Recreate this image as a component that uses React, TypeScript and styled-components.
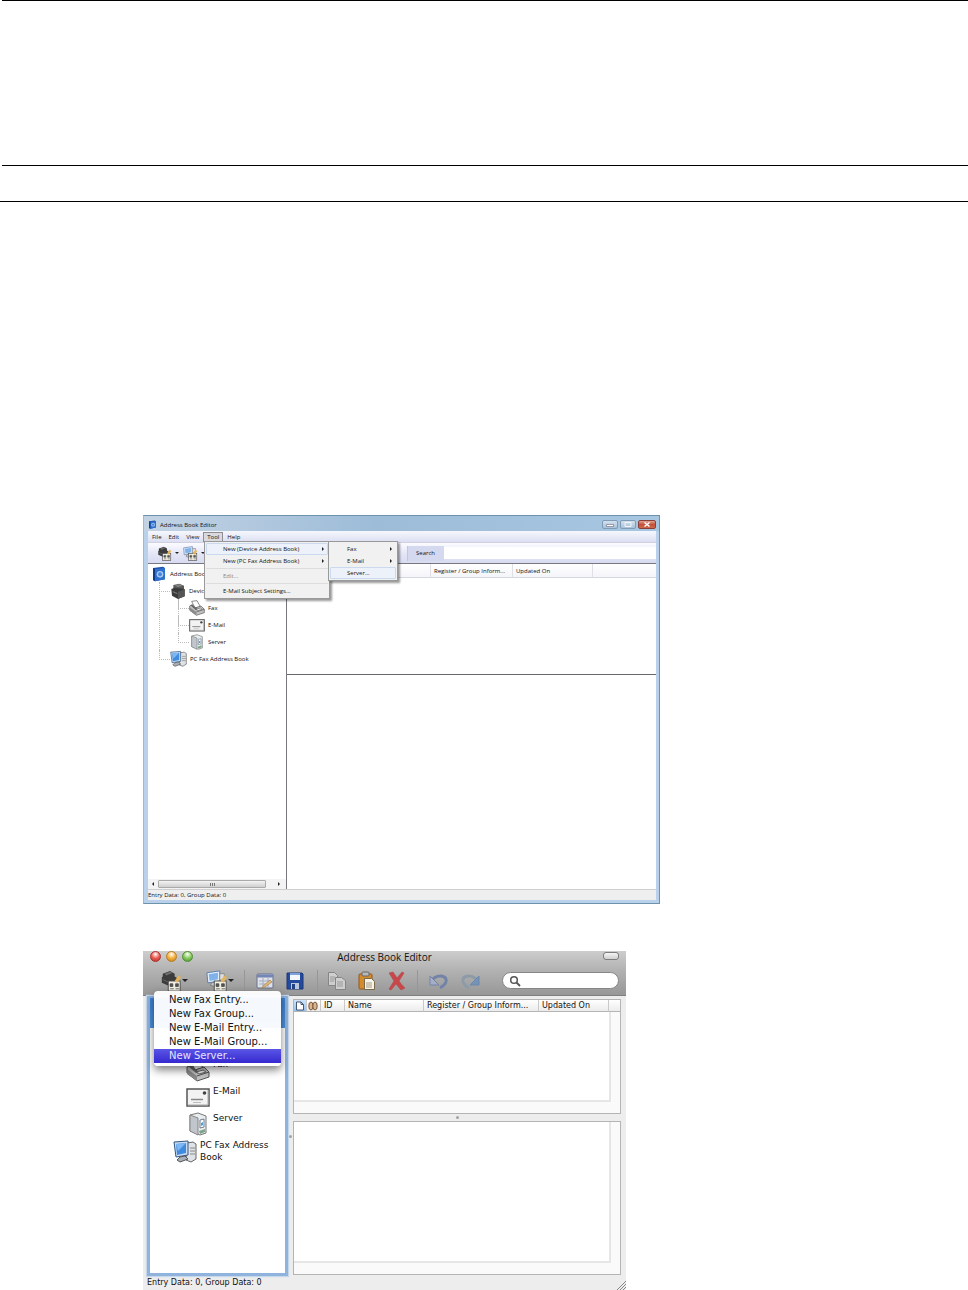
import React from "react";
import styled, { createGlobalStyle } from "styled-components";

const Global = createGlobalStyle`
  * { box-sizing: border-box; }
  body { margin: 0; background: #fff; color: #111; }
  button { font: inherit; color: inherit; border: 0; padding: 0; background: none; }
  input { font: inherit; border: 0; outline: 0; padding: 0; margin: 0; min-width: 0; width: 0; }
  svg { display: block; flex: none; }
`;

const Page = styled.main`
  display: flex;
  flex-direction: column;
`;
const Rule = styled.hr<{ $inset?: boolean; $after: number }>`
  align-self: stretch;
  height: 1px;
  border: 0;
  background: #000;
  margin: 0 0 ${(p) => p.$after}px ${(p) => (p.$inset ? 2 : 0)}px;
`;
const Figures = styled.div`
  display: flex;
  flex-direction: column;
  gap: 47px;
  padding-left: 143px;
`;

/* ---------- icons ---------- */

type IconProps = { size: number };

const BookIcon = ({ size }: IconProps) => (
  <svg width={size} height={size} viewBox="0 0 24 24">
    <path d="M3 3 18 1l3 2v17l-15 3-3-2z" fill="#1c4fa8" />
    <path d="M6 4.500 21 3v17L6 23z" fill="#2f6fce" />
    <path d="M3 3v18l3 2V4.500z" fill="#123a86" />
    <circle cx="13.500" cy="12.500" r="5" fill="#a9cbf2" />
    <circle cx="13.500" cy="12.500" r="3" fill="#4a86da" />
  </svg>
);
const DeviceIcon = ({ size }: IconProps) => (
  <svg width={size} height={size} viewBox="0 0 24 24">
    <path d="M5 3l9-2 7 3v7l-9 3-7-3z" fill="#5a5a5a" />
    <path d="M2 9l5-2 15 2v11l-10 4-9-5z" fill="#3a3a3a" />
    <path d="M12 13l10-4v11l-10 4z" fill="#555" />
    <path d="M7 4l7-2 5 2-7 2z" fill="#858585" />
    <path d="M4 12l7 3v2l-7-3z" fill="#777" />
  </svg>
);
const FaxIcon = ({ size }: IconProps) => (
  <svg width={size} height={size} viewBox="0 0 24 24">
    <path d="M4 2l8-1 5 9-8 2z" fill="#fff" stroke="#555" />
    <path d="M1 9l4-2 4 5 9-3 5 5v5l-12 4L1 15z" fill="#c2c2c2" stroke="#555" />
    <path d="M1 11l10 7v5L1 16z" fill="#8a8a8a" />
    <path d="M11 18l12-4" stroke="#555" />
    <path d="M10 14l7-2 3 2-7 2z" fill="#eee" stroke="#666" />
    <path d="M2 8l3-1 8 7-3 1z" fill="#666" />
  </svg>
);
const MailIcon = ({ size }: IconProps) => (
  <svg width={size} height={size} viewBox="0 0 24 24">
    <rect x="1" y="4" width="22" height="17" fill="#f3f3f3" stroke="#555" strokeWidth="1.500" />
    <path d="M2 20h20V5" fill="none" stroke="#aaa" />
    <path d="M5 14.500h12" stroke="#888" strokeWidth="1.500" />
    <path d="M7 17.500h8" stroke="#bbb" />
    <circle cx="18.500" cy="8" r="1.800" fill="#444" />
  </svg>
);
const ServerIcon = ({ size }: IconProps) => (
  <svg width={size} height={size} viewBox="0 0 24 24">
    <path d="M4 3l8-2 8 3v17l-6 2-10-4z" fill="#e9edf0" stroke="#777" />
    <path d="M4 3l8 3v17l-8-4z" fill="#c0c6cc" stroke="#888" />
    <path d="M14 8l4-1v8l-4 1z" fill="#fff" stroke="#6b7f92" />
    <path d="M15 11l2-1v3l-2 1z" fill="#4f9fc8" />
    <path d="M13 19l6-2v3l-5 2z" fill="#7fa38a" />
  </svg>
);
const PcIcon = ({ size }: IconProps) => (
  <svg width={size} height={size} viewBox="0 0 24 24">
    <path d="M14 4l6-1 3 2v15l-5 3-5-2z" fill="#dfe3e6" stroke="#666" />
    <path d="M17 9h5M17 12h5M17 15h5" stroke="#888" />
    <path d="M1 3l14-1v14L3 18z" fill="#c9dcf1" stroke="#33557f" />
    <path d="M3 5l10-1v10L4 16z" fill="#3f8be0" />
    <path d="M3 5l10-1-8 8z" fill="#7fb7f2" />
    <path d="M7 18l5-1 3 3-8 3-3-2z" fill="#a7b0b9" stroke="#555" />
  </svg>
);
const Tag = () => (
  <g>
    <rect x="9" y="12" width="13" height="11" fill="#f4f1e4" stroke="#4a4a4a" />
    <path d="M11 15h3v3h-3zM11 20.500h4M17 15h3v3h-3zM17 20.500h4" fill="#555" stroke="#444" strokeWidth=".8" />
    <path d="M16 12l4-6 3 2-4 6z" fill="#e3b45c" />
  </g>
);
const AddDeviceIcon = ({ size }: IconProps) => (
  <svg width={size} height={size} viewBox="0 0 24 24">
    <path d="M3 4l8-3 5 3v3l3 2v6l-8 3-9-4V8l1-1z" fill="#3c3c3c" />
    <path d="M5 4l6-2 3 1-7 3zM3 10l7 3v1l-7-3z" fill="#6d6d6d" />
    <Tag />
  </svg>
);
const AddPcIcon = ({ size }: IconProps) => (
  <svg width={size} height={size} viewBox="0 0 24 24">
    <path d="M1 3l14-2v11L2 14z" fill="#e4effb" stroke="#5579a8" />
    <path d="M3 4.500l10-1.500v7L4 12z" fill="#7fb1ea" />
    <path d="M6 14l4-1v5l-5-1z" fill="#c7ccd2" stroke="#777" />
    <path d="M15 4h5v7h-5z" fill="#ddd" stroke="#888" />
    <Tag />
  </svg>
);
const EditIcon = () => (
  <svg width="20" height="20" viewBox="0 0 20 20">
    <rect x="2" y="3" width="16" height="14" rx="1" fill="#dfe2ea" stroke="#66728f" />
    <path d="M2 3.500h16v3H2z" fill="#7486b5" />
    <path d="M4 10h12M4 13h8M8 7v9M13 7v9" stroke="#a3abbd" />
    <path d="M8 15l7-6 2 2-7 5-3 1z" fill="#e0b878" stroke="#a5855a" strokeWidth=".7" />
  </svg>
);
const SaveIcon = () => (
  <svg width="20" height="20" viewBox="0 0 20 20">
    <path d="M2 2h15l1 1v15H2z" fill="#234a9c" stroke="#1b3878" />
    <rect x="5" y="2" width="10" height="7" fill="#f3f6fb" />
    <path d="M5 2h10v2H5z" fill="#7ea2dc" />
    <rect x="6" y="12" width="8" height="6" fill="#b9c6de" />
    <rect x="7" y="13" width="3" height="5" fill="#23407f" />
  </svg>
);
const CopyIcon = () => (
  <svg width="20" height="20" viewBox="0 0 20 20">
    <g fill="#cfcfcf" stroke="#858585">
      <path d="M1.500 1.500h6l3 3v10h-9z" />
      <path d="M8.500 6.500h6l4 3v9h-10z" />
    </g>
    <path d="M3 6h5M3 8h5M3 10h4M10 11h6M10 13h6M10 15h6" stroke="#999" />
  </svg>
);
const PasteIcon = () => (
  <svg width="20" height="20" viewBox="0 0 20 20">
    <rect x="2" y="3" width="13" height="15" rx="1" fill="#d58a2c" stroke="#93591a" />
    <rect x="5" y="1" width="7" height="4" rx="1" fill="#b9b9b9" stroke="#666" />
    <path d="M7.500 7.500h7l3 3v8h-10z" fill="#f6f3e8" stroke="#7a6a4c" />
    <path d="M9 12h6M9 14h6M9 16h6" stroke="#a89c80" />
  </svg>
);
const DeleteIcon = () => (
  <svg width="20" height="20" viewBox="0 0 20 20">
    <path d="M2 2l4-1c2 3 3 4 4 6l5-6 2 1-5 8c2 3 4 5 6 7l-4 2c-2-2-3-4-5-6l-5 6-2-1 5-8C5 7 4 5 2 2z" fill="#c9474a" stroke="#b0494b" strokeWidth=".6" />
  </svg>
);
const UndoIcon = () => (
  <svg width="22" height="20" viewBox="0 0 22 20">
    <path
      d="M4 9c4-5 12-5 14-1 1 3-1 6-6 9"
      fill="none"
      stroke="#7383a8"
      strokeWidth="3"
    />
    <path d="M2 5v9h9z" fill="#a4aec6" stroke="#7383a8" />
  </svg>
);
const RedoIcon = () => (
  <svg width="22" height="20" viewBox="0 0 22 20">
    <path
      d="M18 9C14 4 6 4 4 8c-1 3 1 6 6 9"
      fill="none"
      stroke="#8d9ba9"
      strokeWidth="3"
    />
    <path d="M20 5v9h-9z" fill="#7593b8" stroke="#6b87ab" />
  </svg>
);
const SearchIcon = () => (
  <svg width="12" height="12" viewBox="0 0 12 12">
    <circle cx="5" cy="5" r="3.300" fill="none" stroke="#555" strokeWidth="1.500" />
    <path d="M7.500 7.500l3.500 3.500" stroke="#555" strokeWidth="1.800" />
  </svg>
);
const PageIcon = () => (
  <svg width="10" height="10" viewBox="0 0 10 10">
    <path d="M1.500 1h4.500l2.500 2.500V9h-7z" fill="#fff" stroke="#45566e" />
    <path d="M6 1v2.500h2.500" fill="none" stroke="#45566e" />
  </svg>
);
const PeopleIcon = () => (
  <svg width="10" height="10" viewBox="0 0 10 10">
    <g fill="#d9b591" stroke="#6d4a30" strokeWidth=".9">
      <ellipse cx="3" cy="5" rx="2.200" ry="4" />
      <ellipse cx="7" cy="5" rx="2.200" ry="4" />
    </g>
  </svg>
);

const Caret = styled.i<{ $dir: "down" | "right" | "left"; $size?: number }>`
  flex: none;
  width: 0;
  height: 0;
  border: ${(p) => p.$size ?? 2}px solid transparent;
  ${(p) =>
    p.$dir === "down"
      ? "border-top-color:#222;border-bottom-width:0;"
      : p.$dir === "right"
      ? "border-left-color:#222;border-right-width:0;"
      : "border-right-color:#222;border-left-width:0;"}
`;

/* ---------- Windows window ---------- */

const WinFrame = styled.section`
  position: relative;
  width: 100%;
  max-width: 517px;
  padding: 0 3px 3px 4px;
  border: 1px solid #6d93ac;
  border-left-color: #9db9d3;
  background: #b9d1ea;
  font: 6px/8px "Open Sans", "Noto Sans", sans-serif;
`;
const WinTitle = styled.header`
  display: flex;
  align-items: center;
  gap: 3px;
  height: 15px;
  margin: 0 -3px 0 -4px;
  padding: 2px 3px 0 4px;
  background: linear-gradient(90deg, #c3d3e4, #9dbcd8 45%, #a6c6e2);
  h2 { margin: 0; flex: 1; font-size: 6px; line-height: 8px; font-weight: 400; }
`;
const WinButtons = styled.div`
  display: flex;
  gap: 2px;
`;
const WinButton = styled.button<{ $close?: boolean }>`
  display: grid;
  place-items: center;
  width: ${(p) => (p.$close ? 18 : 16)}px;
  height: 9px;
  border: 1px solid ${(p) => (p.$close ? "#8a4038" : "#7f9bb5")};
  border-radius: 2px;
  background: ${(p) =>
    p.$close
      ? "linear-gradient(#e3a294, #c4513a 50%, #cf6a4c)"
      : "linear-gradient(#d3e1ee, #a9c1d9)"};
`;
const WinClient = styled.div`
  position: relative;
  display: flex;
  flex-direction: column;
  background: #fff;
`;
const MenuBar = styled.nav`
  display: flex;
  align-items: center;
  height: 12px;
  padding-left: 1px;
  background: linear-gradient(#f6f7fd, #dcdff2);
  border-bottom: 1px solid #cfd0e0;
`;
const MenuBarItem = styled.button<{ $open?: boolean }>`
  height: 10px;
  padding: 0 ${(p) => (p.$open ? 3 : 2)}px;
  margin-right: 1px;
  font-size: 6px;
  line-height: 8px;
  border: 1px solid ${(p) => (p.$open ? "#8d8d92" : "transparent")};
  background: ${(p) => (p.$open ? "#d9d9de" : "none")};
`;
const WinToolbar = styled.div`
  display: flex;
  align-items: center;
  height: 21px;
  padding-left: 9px;
  background: linear-gradient(#fbfbff, #e2e4f6 60%, #d9dbf1);
  border-bottom: 1px solid #77777f;
`;
const ToolButton = styled.button<{ $gap: number }>`
  display: flex;
  align-items: center;
  gap: 3px;
  margin-right: ${(p) => p.$gap}px;
`;
const WinSearch = styled.form`
  display: flex;
  flex: 1;
  height: 15px;
  margin-left: 198px;
  border-left: 1px solid #c2c5dc;
  label { width: 36px; padding: 3px 0 0 8px; background: #d5d9f0; }
  input { flex: 1; height: 12px; margin-top: 1px; background: #fff; }
`;
const WinBody = styled.div`
  display: grid;
  grid-template-columns: 138px 1fr;
  height: 325px;
`;
const WinTree = styled.div`
  position: relative;
  display: flex;
  flex-direction: column;
  min-width: 0;
  padding-top: 1px;
`;
const TreeList = styled.ul<{ $inset?: number }>`
  position: relative;
  margin: 0;
  padding: 0 0 0 ${(p) => p.$inset ?? 0}px;
  list-style: none;
`;
const TreeRow = styled.div`
  display: flex;
  align-items: center;
  gap: 3px;
  height: 17px;
  white-space: nowrap;
`;
const Branch = styled.li<{ $last?: boolean }>`
  position: relative;
  &::before {
    content: "";
    position: absolute;
    left: -11px;
    top: 0;
    width: 10px;
    height: 9px;
    border-left: 1px dotted #bbb;
    border-bottom: 1px dotted #bbb;
  }
  &::after {
    content: "";
    display: ${(p) => (p.$last ? "none" : "block")};
    position: absolute;
    left: -11px;
    top: 0;
    bottom: 0;
    border-left: 1px dotted #bbb;
  }
`;
const WinScroll = styled.div`
  display: flex;
  align-items: center;
  justify-content: space-between;
  height: 10px;
  margin-top: auto;
  padding: 0 6px 0 4px;
  background: #f3f3f3;
  div {
    flex: 1;
    display: grid;
    place-items: center;
    height: 8px;
    margin: 0 12px 0 4px;
    border: 1px solid #aaa;
    border-radius: 1px;
    background: linear-gradient(#f4f4f4, #cfcfcf);
  }
  div::before {
    content: "";
    width: 5px;
    height: 3px;
    background: repeating-linear-gradient(90deg, #777 0 1px, transparent 1px 2px);
  }
`;
const WinPanes = styled.div`
  display: grid;
  grid-template-rows: 107px 1fr;
  gap: 3px;
  min-width: 0;
  border-left: 1px solid #77777f;
`;
const WinLower = styled.div`
  border-top: 1px solid #66666c;
`;
const WinTable = styled.table`
  width: 100%;
  table-layout: fixed;
  border-collapse: separate;
  border-spacing: 0;
  th {
    height: 14px;
    padding: 0 3px;
    font-weight: 400;
    text-align: left;
    white-space: nowrap;
    border-right: 1px solid #dfe0e6;
    border-bottom: 1px solid #d5d6de;
    background: linear-gradient(#fff, #f4f5f9);
  }
  th:last-child { border-right: 0; }
`;
const WinStatus = styled.footer`
  height: 11px;
  padding: 1px 0 0;
  background: #f0efef;
  border-top: 1px solid #d0cfcf;
`;
const WinMenu = styled.div<{ $x: number; $y: number; $w: number; $indent: number }>`
  position: absolute;
  z-index: 2;
  left: ${(p) => p.$x}px;
  top: ${(p) => p.$y}px;
  width: ${(p) => p.$w}px;
  display: flex;
  flex-direction: column;
  padding: 1px;
  border: 1px solid #999;
  background: #f1f1f1;
  box-shadow: 2px 2px 2px rgba(0, 0, 0, 0.4);
  button { padding-left: ${(p) => p.$indent}px; }
  hr { width: 100%; margin: 1px 0; border: 0; border-top: 1px solid #dcdcdc; }
`;
const WinMenuItem = styled.button<{ $hot?: boolean; $off?: boolean }>`
  display: flex;
  align-items: center;
  justify-content: space-between;
  height: 12px;
  padding-right: 3px;
  border: 1px solid ${(p) => (p.$hot ? "#cbd9ee" : "transparent")};
  border-radius: 1px;
  background: ${(p) => (p.$hot ? "#edf1fa" : "none")};
  color: ${(p) => (p.$off ? "#888" : "#111")};
`;

function WindowsEditor() {
  return (
    <WinFrame>
      <WinTitle>
        <BookIcon size={9} />
        <h2>Address Book Editor</h2>
        <WinButtons>
          <WinButton aria-label="Minimize">
            <svg width="8" height="5" viewBox="0 0 8 5"><path d="M.5 2.500h7v2h-7z" fill="#fff" stroke="#667" strokeWidth=".6" /></svg>
          </WinButton>
          <WinButton aria-label="Maximize">
            <svg width="8" height="5" viewBox="0 0 8 5"><path d="M1 .5h6v4H1z" fill="none" stroke="#f2f5f9" /></svg>
          </WinButton>
          <WinButton aria-label="Close" $close>
            <svg width="8" height="5" viewBox="0 0 8 5"><path d="M1.500.500l5 4M6.500.500l-5 4" stroke="#fff" strokeWidth="1.400" /></svg>
          </WinButton>
        </WinButtons>
      </WinTitle>
      <WinClient>
        <MenuBar>
          <MenuBarItem>File</MenuBarItem>
          <MenuBarItem>Edit</MenuBarItem>
          <MenuBarItem>View</MenuBarItem>
          <MenuBarItem $open>Tool</MenuBarItem>
          <MenuBarItem>Help</MenuBarItem>
        </MenuBar>
        <WinToolbar>
          <ToolButton $gap={4} aria-label="New device entry"><AddDeviceIcon size={15} /><Caret $dir="down" /></ToolButton>
          <ToolButton $gap={4} aria-label="New PC entry"><AddPcIcon size={15} /><Caret $dir="down" /></ToolButton>
          <WinSearch>
            <label htmlFor="win-search">Search</label>
            <input id="win-search" type="text" />
          </WinSearch>
        </WinToolbar>
        <WinBody>
          <WinTree>
            <TreeList $inset={3}>
              <li>
                <TreeRow><BookIcon size={16} />Address Book</TreeRow>
                <TreeList $inset={19}>
                  <Branch>
                    <TreeRow><DeviceIcon size={16} />Device</TreeRow>
                    <TreeList $inset={19}>
                      <Branch><TreeRow><FaxIcon size={16} />Fax</TreeRow></Branch>
                      <Branch><TreeRow><MailIcon size={16} />E-Mail</TreeRow></Branch>
                      <Branch $last><TreeRow><ServerIcon size={16} />Server</TreeRow></Branch>
                    </TreeList>
                  </Branch>
                  <Branch $last><TreeRow><PcIcon size={17} />PC Fax Address Book</TreeRow></Branch>
                </TreeList>
              </li>
            </TreeList>
            <WinScroll><Caret $dir="left" /><div /><Caret $dir="right" /></WinScroll>
          </WinTree>
          <WinPanes>
            <WinTable>
              <colgroup><col width="144" /><col width="82" /><col width="80" /><col /></colgroup>
              <thead><tr><th /><th>Register / Group Inform...</th><th>Updated On</th><th /></tr></thead>
              <tbody />
            </WinTable>
            <WinLower />
          </WinPanes>
        </WinBody>
        <WinStatus>Entry Data: 0, Group Data: 0</WinStatus>
        <WinMenu $x={56} $y={10} $w={126} $indent={16}>
          <WinMenuItem $hot>New (Device Address Book)<Caret $dir="right" /></WinMenuItem>
          <WinMenuItem>New (PC Fax Address Book)<Caret $dir="right" /></WinMenuItem>
          <hr />
          <WinMenuItem $off>Edit...</WinMenuItem>
          <hr />
          <WinMenuItem>E-Mail Subject Settings...</WinMenuItem>
        </WinMenu>
        <WinMenu $x={180} $y={10} $w={70} $indent={16}>
          <WinMenuItem>Fax<Caret $dir="right" /></WinMenuItem>
          <WinMenuItem>E-Mail<Caret $dir="right" /></WinMenuItem>
          <WinMenuItem $hot>Server...</WinMenuItem>
        </WinMenu>
      </WinClient>
    </WinFrame>
  );
}

/* ---------- Mac window ---------- */

const MacFrame = styled.section`
  position: relative;
  width: 100%;
  max-width: 483px;
  background: #ededed;
  font: 9px/12px "DejaVu Sans", sans-serif;
  color: #111;
`;
const MacHead = styled.header`
  height: 45px;
  background: linear-gradient(#cdcdcd, #b4b4b4 40%, #979797);
  border-bottom: 1px solid #7f7f7f;
`;
const MacTitle = styled.div`
  display: grid;
  grid-template-columns: 1fr auto 1fr;
  height: 12px;
  padding: 0 7px;
  h2 { margin: 0; font: 400 10px/12px "Open Sans", sans-serif; }
`;
const Lights = styled.div`
  display: flex;
  gap: 5px;
`;
const Light = styled.button<{ $c: string; $d: string }>`
  width: 11px;
  height: 11px;
  border-radius: 50%;
  border: 1px solid ${(p) => p.$d};
  background: radial-gradient(circle at 50% 25%, #fff, ${(p) => p.$c} 50%, ${(p) => p.$d});
`;
const Pill = styled.button`
  justify-self: end;
  width: 16px;
  height: 8px;
  margin-top: 1px;
  border: 1px solid #7d7d7d;
  border-radius: 3px;
  background: linear-gradient(#f5f5f5, #d0d0d0);
`;
const MacTools = styled.div`
  display: flex;
  align-items: center;
  height: 32px;
  padding: 3px 7px 0 17px;
`;
const MacTool = styled.button<{ $gap: number }>`
  display: flex;
  align-items: center;
  margin-right: ${(p) => p.$gap}px;
`;
const Divider = styled.span<{ $gap: number }>`
  width: 1px;
  height: 22px;
  margin-right: ${(p) => p.$gap}px;
  background: #969696;
`;
const MacSearch = styled.label`
  display: flex;
  align-items: center;
  flex: 1;
  gap: 3px;
  height: 17px;
  padding: 0 8px 0 6px;
  border: 1px solid #858585;
  border-radius: 9px;
  background: #fff;
  input { flex: 1; background: none; }
`;
const MacBody = styled.div`
  display: grid;
  grid-template-columns: 141px 5px 1fr;
  height: 280px;
  padding: 0 5px 0 4px;
`;
const MacTree = styled.div`
  border: 3px solid #8fb3dc;
  border-top-width: 2px;
  background: #fff;
  box-shadow: 0 0 1px 1px #c6d8ec;
`;
const MacSelected = styled.div`
  height: 30px;
  background: linear-gradient(#3f83d6, #4c90dd);
`;
const MacTreeList = styled.ul`
  display: flex;
  flex-direction: column;
  margin: 0;
  padding: 30px 0 0;
  list-style: none;
`;
const MacTreeRow = styled.li<{ $indent: number }>`
  display: flex;
  gap: 3px;
  height: 27px;
  padding-left: ${(p) => p.$indent}px;
`;
const MacSplit = styled.div`
  display: grid;
  place-items: center;
`;
const Dot = styled.i`
  width: 3px;
  height: 3px;
  border-radius: 50%;
  background: #a2a2a8;
`;
const MacPanes = styled.div`
  display: grid;
  grid-template-rows: 115px 7px 1fr;
  min-width: 0;
  padding: 3px 0 1px;
`;
const MacPane = styled.div`
  position: relative;
  border: 1px solid #b4b4b4;
  padding: 0 9px 11px 0;
  background: #fafafa;
`;
const MacSheet = styled.div`
  display: flex;
  height: 100%;
  background: #fff;
  border-right: 2px solid #e6e6e6;
  border-bottom: 2px solid #e6e6e6;
`;
const MacTable = styled.table`
  position: absolute;
  left: 0;
  top: 0;
  width: 100%;
  table-layout: fixed;
  border-spacing: 0;
  th {
    height: 12px;
    padding: 0 3px;
    font-size: 8px;
    line-height: 10px;
    font-weight: 400;
    text-align: left;
    white-space: nowrap;
    border-right: 1px solid #c9c9c9;
    border-bottom: 1px solid #b5b5b5;
    background: linear-gradient(#fff, #ececec);
  }
  th.icon { padding: 0 1px; }
  th.active { background: linear-gradient(#cfe5fb, #8fc1f2); }
  th:last-child { border-right: 0; }
`;
const MacStatus = styled.footer`
  display: flex;
  justify-content: space-between;
  align-items: flex-end;
  height: 14px;
  padding-left: 4px;
  font-size: 8px;
  line-height: 14px;
`;
const MacMenu = styled.div`
  position: absolute;
  z-index: 2;
  left: 11px;
  top: 40px;
  width: 127px;
  display: flex;
  flex-direction: column;
  padding: 2px 0 3px;
  border-radius: 4px;
  background: rgba(255, 255, 255, 0.95);
  box-shadow: 0 4px 8px rgba(0, 0, 0, 0.5);
`;
const MacMenuItem = styled.button<{ $hot?: boolean }>`
  height: 14px;
  padding-left: 15px;
  font-size: 10px;
  line-height: 14px;
  text-align: left;
  white-space: nowrap;
  color: ${(p) => (p.$hot ? "#e4e4ff" : "#111")};
  background: ${(p) => (p.$hot ? "linear-gradient(#5a55e6, #3629cf)" : "none")};
`;

function MacEditor() {
  return (
    <MacFrame>
      <MacHead>
        <MacTitle>
          <Lights>
            <Light aria-label="Close" $c="#ee5a50" $d="#a8332d" />
            <Light aria-label="Minimize" $c="#f6b03c" $d="#b97c24" />
            <Light aria-label="Zoom" $c="#86cc5a" $d="#4e8f33" />
          </Lights>
          <h2>Address Book Editor</h2>
          <Pill aria-label="Toggle toolbar" />
        </MacTitle>
        <MacTools>
          <MacTool $gap={18} aria-label="New device entry"><AddDeviceIcon size={22} /><Caret $dir="down" $size={3} /></MacTool>
          <MacTool $gap={10} aria-label="New PC entry"><AddPcIcon size={22} /><Caret $dir="down" $size={3} /></MacTool>
          <Divider $gap={10} />
          <MacTool $gap={10} aria-label="Edit"><EditIcon /></MacTool>
          <MacTool $gap={12} aria-label="Save"><SaveIcon /></MacTool>
          <Divider $gap={9} />
          <MacTool $gap={10} aria-label="Copy"><CopyIcon /></MacTool>
          <MacTool $gap={10} aria-label="Paste"><PasteIcon /></MacTool>
          <MacTool $gap={10} aria-label="Delete"><DeleteIcon /></MacTool>
          <Divider $gap={10} />
          <MacTool $gap={9} aria-label="Undo"><UndoIcon /></MacTool>
          <MacTool $gap={21} aria-label="Redo"><RedoIcon /></MacTool>
          <MacSearch>
            <SearchIcon />
            <input type="text" aria-label="Search" />
          </MacSearch>
        </MacTools>
      </MacHead>
      <MacBody>
        <MacTree>
          <MacSelected />
          <MacTreeList>
            <MacTreeRow $indent={36}><FaxIcon size={24} /><span>Fax</span></MacTreeRow>
            <MacTreeRow $indent={36}><MailIcon size={24} /><span>E-Mail</span></MacTreeRow>
            <MacTreeRow $indent={36}><ServerIcon size={24} /><span>Server</span></MacTreeRow>
            <MacTreeRow $indent={23}><PcIcon size={24} /><span>PC Fax Address<br />Book</span></MacTreeRow>
          </MacTreeList>
        </MacTree>
        <MacSplit><Dot /></MacSplit>
        <MacPanes>
          <MacPane>
            <MacSheet />
            <MacTable>
              <colgroup><col width="13" /><col width="14" /><col width="24" /><col width="79" /><col width="115" /><col width="70" /><col /></colgroup>
              <thead>
                <tr>
                  <th className="icon active"><PageIcon /></th>
                  <th className="icon"><PeopleIcon /></th>
                  <th>ID</th><th>Name</th><th>Register / Group Inform...</th><th>Updated On</th><th />
                </tr>
              </thead>
            </MacTable>
          </MacPane>
          <MacSplit><Dot /></MacSplit>
          <MacPane><MacSheet /></MacPane>
        </MacPanes>
      </MacBody>
      <MacStatus>
        Entry Data: 0, Group Data: 0
        <svg width="10" height="10" viewBox="0 0 10 10"><path d="M1 10l9-9M4 10l6-6M7 10l3-3" stroke="#888" /></svg>
      </MacStatus>
      <MacMenu>
        <MacMenuItem>New Fax Entry...</MacMenuItem>
        <MacMenuItem>New Fax Group...</MacMenuItem>
        <MacMenuItem>New E-Mail Entry...</MacMenuItem>
        <MacMenuItem>New E-Mail Group...</MacMenuItem>
        <MacMenuItem $hot>New Server...</MacMenuItem>
      </MacMenu>
    </MacFrame>
  );
}

export default function App() {
  return (
    <>
      <Global />
      <Page>
        <Rule $inset $after={164} />
        <Rule $inset $after={35} />
        <Rule $after={313} />
        <Figures>
          <WindowsEditor />
          <MacEditor />
        </Figures>
      </Page>
    </>
  );
}
